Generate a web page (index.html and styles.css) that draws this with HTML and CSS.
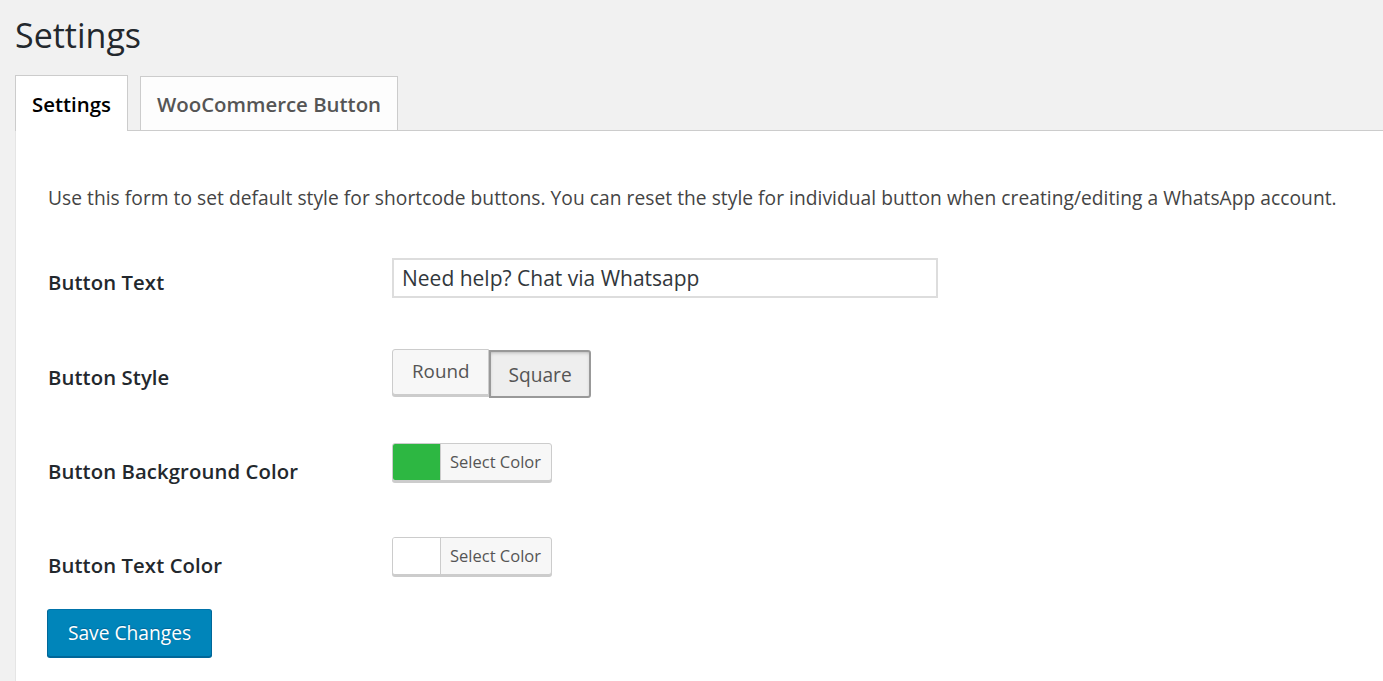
FILE: index.html
```html
<!DOCTYPE html>
<html>
<head>
<meta charset="utf-8">
<link rel="stylesheet" href="styles.css">
</head>
<body>
<div class="wrap">
  <h1 class="title">Settings</h1>
  <div class="tabs">
    <div class="tab active">Settings</div>
    <div class="tab">WooCommerce Button</div>
    <div class="tab-rest"></div>
  </div>
  <div class="panel">
    <p class="intro">Use this form to set default style for shortcode buttons. You can reset the style for individual button when creating/editing a WhatsApp account.</p>
    <div class="form">
      <div class="row row1">
        <div class="label">Button Text</div>
        <div class="control"><div class="input">Need help? Chat via Whatsapp</div></div>
      </div>
      <div class="row">
        <div class="label">Button Style</div>
        <div class="control">
          <div class="btn-group">
            <div class="btn">Round</div>
            <div class="btn pressed">Square</div>
          </div>
        </div>
      </div>
      <div class="row">
        <div class="label">Button Background Color</div>
        <div class="control">
          <div class="picker"><span class="swatch green"></span><span class="pick-text">Select Color</span></div>
        </div>
      </div>
      <div class="row row4">
        <div class="label">Button Text Color</div>
        <div class="control">
          <div class="picker"><span class="swatch white"></span><span class="pick-text">Select Color</span></div>
        </div>
      </div>
      <div class="save">Save Changes</div>
    </div>
  </div>
</div>
</body>
</html>
```

FILE: styles.css
```css
html, body {
  margin: 0;
  padding: 0;
  background: #f1f1f1;
  height: 100%;
  overflow: hidden;
}
body {
  font-family: "Open Sans", "Noto Sans", sans-serif;
  color: #23282d;
}
.wrap {
  padding-left: 15px;
}
.title {
  margin: 0;
  padding-top: 13px;
  height: 75px;
  box-sizing: border-box;
  font-weight: 400;
  font-size: 34px;
  line-height: 44px;
  color: #23282d;
}
.tabs {
  display: flex;
  align-items: flex-end;
  height: 56px;
}
.tab {
  box-sizing: border-box;
  border: 1px solid #ccc;
  background: #fdfdfd;
  padding: 0 16px;
  font-size: 20.4px;
  font-weight: 600;
  color: #555;
  line-height: 56px;
  margin-right: 12px;
}
.tab.active {
  height: 56px;
  border-bottom: none;
  background: #fff;
  color: #000;
  position: relative;
  z-index: 1;
}
.tabs .tab:not(.active) {
  height: 55px;
  line-height: 54px;
}
.tab-rest {
  flex: 1;
  border-bottom: 1px solid #ccc;
  margin-left: -12px;
}
.panel {
  background: #fff;
  border-left: 1px solid #e5e5e5;
  margin-top: -1px;
  border-top: 1px solid #ccc;
  padding-left: 32px;
  height: 600px;
}
.intro {
  margin: 0;
  padding-top: 53px;
  font-size: 19.2px;
  letter-spacing: 0.04px;
  line-height: 28px;
  color: #444;
}
.form {
  padding-top: 34px;
}
.row {
  display: flex;
  align-items: flex-start;
  height: 94px;
}
.row1 {
  height: 91px;
}
.row4 {
  height: 83px;
}
.label {
  width: 344px;
  flex-shrink: 0;
  font-size: 20.3px;
  letter-spacing: 0.1px;
  font-weight: 600;
  line-height: 28px;
  padding-top: 26px;
  color: #23282d;
}
.row1 .label {
  padding-top: 22px;
}
.control {
  padding-top: 12px;
}
.input {
  width: 546px;
  height: 40px;
  box-sizing: border-box;
  border: 2px solid #ddd;
  padding: 0 8px;
  font-size: 21px;
  line-height: 37px;
  color: #32373c;
  background: #fff;
}
.btn-group {
  display: flex;
}
.btn {
  height: 46px;
  box-sizing: border-box;
  border: 1px solid #ccc;
  border-radius: 3px 0 0 3px;
  background: #f7f7f7;
  box-shadow: 0 2px 0 #ccc;
  font-size: 18.8px;
  color: #555;
  line-height: 42px;
  padding: 0 19px;
}
.btn.pressed {
  border: 2px solid #999;
  border-radius: 0 3px 3px 0;
  background: #eee;
  box-shadow: inset 0 2px 5px -3px rgba(0,0,0,0.5);
  line-height: 46px;
  height: 48px;
  margin-top: 1px;
  padding: 0 17px;
  font-size: 19.2px;
}
.picker {
  display: flex;
  width: 160px;
  height: 38px;
  box-sizing: border-box;
  border: 1px solid #ccc;
  border-radius: 3px;
  background: #f7f7f7;
  box-shadow: 0 2px 0 #ccc;
  overflow: hidden;
}
.swatch {
  width: 47px;
  height: 100%;
  border-right: 1px solid #ccc;
}
.swatch.green { background: #2db742; }
.swatch.white { background: #fff; }
.pick-text {
  font-size: 16.5px;
  line-height: 35px;
  color: #555;
  padding-left: 9px;
}
.save {
  display: inline-block;
  width: 165px;
  height: 48px;
  margin-left: -1px;
  margin-top: 1px;
  box-sizing: border-box;
  background: #0085ba;
  border: 1px solid #0073aa;
  border-color: #0073aa #006799 #006799;
  border-radius: 3px;
  box-shadow: 0 1px 0 #006799;
  color: #fff;
  font-size: 19.2px;
  line-height: 46px;
  text-align: center;
  text-shadow: 0 -1px 1px #006799;
}
```
